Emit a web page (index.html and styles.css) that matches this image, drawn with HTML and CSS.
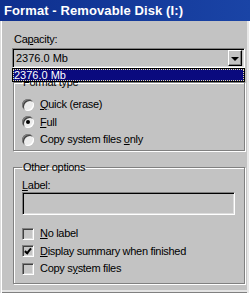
FILE: index.html
```html
<!DOCTYPE html>
<html lang="en">
<head>
    <meta charset="UTF-8">
    <title>Format - Removable Disk (I:)</title>
    <link rel="stylesheet" href="styles.css">
</head>
<body>
    <div class="window">
        <div class="title-bar">Format - Removable Disk (I:)</div>

        <div class="content">
            <div class="field-label">Ca<u>p</u>acity:</div>
            <div class="combo">
                <span class="combo-value">2376.0 Mb</span>
                <span class="combo-btn"><span class="arrow"></span></span>
                <!-- open dropdown list -->
                <div class="combo-list"><span class="combo-item">2376.0 Mb</span></div>
            </div>

            <fieldset class="group group-format">
                <legend>Format type</legend>
                <label class="option"><span class="radio"></span><span><u>Q</u>uick (erase)</span></label>
                <label class="option"><span class="radio checked"></span><span><u>F</u>ull</span></label>
                <label class="option"><span class="radio"></span><span>Copy system files <u>o</u>nly</span></label>
            </fieldset>

            <fieldset class="group group-other">
                <legend>Other options</legend>
                <div class="field-label"><u>L</u>abel:</div>
                <div class="textbox"></div>
                <label class="option check-row"><span class="checkbox"></span><span><u>N</u>o label</span></label>
                <label class="option check-row"><span class="checkbox checked"></span><span><u>D</u>isplay summary when finished</span></label>
                <label class="option check-row"><span class="checkbox"></span><span>Copy s<u>y</u>stem files</span></label>
            </fieldset>
        </div>
    </div>
</body>
</html>
```

FILE: styles.css
```css
* {
    box-sizing: border-box;
    margin: 0;
    padding: 0;
}

body {
    font-family: 'Liberation Sans', Arial, sans-serif;
    font-size: 11px;
    line-height: 13px;
    letter-spacing: -0.3px;
    color: #000;
    background: #c3c3c3;
}

u {
    text-decoration: underline;
    text-underline-offset: 1px;
}

.window {
    width: 250px;
    height: 293px;
    background: #c3c3c3;
    box-shadow: inset 1px 0 #dcdcdc, inset 2px 0 #fff, inset -1px 0 #fff, inset -3px 0 #e8e8e8, inset 0 -1px #808080, inset 0 -3px #e4e4e4;
    overflow: hidden;
}

.title-bar {
    height: 21px;
    padding: 3px 0 0 4px;
    background: linear-gradient(90deg, #0e2f8e 0%, #1a44a6 100%);
    color: #fff;
    font-weight: bold;
    font-size: 13px;
    line-height: 15px;
    letter-spacing: 0.1px;
}

.content {
    padding: 12px 5px 0 12px;
}

.field-label {
    height: 15px;
    padding-left: 2px;
}

/* Capacity combo */
.combo {
    position: relative;
    height: 20px;
    width: 233px;
    display: flex;
    align-items: center;
    border: 1px solid;
    border-color: #808080 #fff #fff #808080;
    box-shadow: inset 1px 1px #000, inset -1px -1px #dcdcdc;
}

.combo-value {
    flex: 1;
    padding-left: 3px;
    letter-spacing: 0;
}

.combo-btn {
    width: 14px;
    height: 16px;
    margin-right: 2px;
    background: #c3c3c3;
    border: 1px solid;
    border-color: #fff #000 #000 #fff;
    box-shadow: inset -1px -1px #808080;
    display: flex;
    align-items: center;
    justify-content: center;
}

.arrow {
    width: 0;
    height: 0;
    border-left: 4px solid transparent;
    border-right: 4px solid transparent;
    border-top: 4px solid #000;
    margin-top: 1px;
}

.combo-list {
    position: absolute;
    left: -1px;
    top: 19px;
    width: 233px;
    height: 14px;
    background: #0a0a7e;
    border: 1px solid #000;
    z-index: 2;
}

.combo-item {
    display: block;
    height: 12px;
    line-height: 12px;
    padding-left: 1px;
    color: #fff;
    letter-spacing: 0;
    outline: 1px dotted #e8e0a0;
    outline-offset: -1px;
}

/* Group boxes */
.group {
    width: 232px;
    margin-left: 1px;
    border: 1px solid #808080;
    box-shadow: inset 1px 1px #fff, 1px 1px #fff;
    padding: 0 0 0 8px;
}

.group legend {
    padding: 0 1px;
    line-height: 13px;
}

.group-format {
    margin-top: 8px;
    height: 75px;
    padding-top: 7px;
}

.group-other {
    margin-top: 10px;
    height: 123px;
    padding-top: 5px;
}

.group-other .field-label {
    height: 13px;
    padding-left: 0;
}

.option {
    display: flex;
    align-items: center;
    gap: 6px;
    height: 17.5px;
    padding-left: 0;
}

.radio {
    width: 12px;
    height: 12px;
    border-radius: 50%;
    background: #ececec;
    box-shadow: inset 1px 1px #808080, inset -1px -1px #fff, inset 2px 2px #404040;
    display: flex;
    align-items: center;
    justify-content: center;
}

.radio.checked::after {
    content: "";
    width: 4px;
    height: 4px;
    border-radius: 50%;
    background: #000;
}

.textbox {
    width: 213px;
    height: 23px;
    border: 1px solid;
    border-color: #808080 #fff #fff #808080;
    box-shadow: inset 1px 1px #000, inset -1px -1px #dcdcdc;
    background: #c3c3c3;
    margin-bottom: 10px;
}

.checkbox {
    width: 12px;
    height: 12px;
    background: #c6c6c6;
    border: 1px solid;
    border-color: #808080 #fff #fff #808080;
    box-shadow: inset 1px 1px #404040, inset -1px -1px #dcdcdc;
    position: relative;
}

.checkbox.checked::after {
    content: "";
    position: absolute;
    left: 3px;
    top: 1px;
    width: 2px;
    height: 5px;
    border-right: 2px solid #000;
    border-bottom: 2px solid #000;
    transform: rotate(40deg);
}
```
